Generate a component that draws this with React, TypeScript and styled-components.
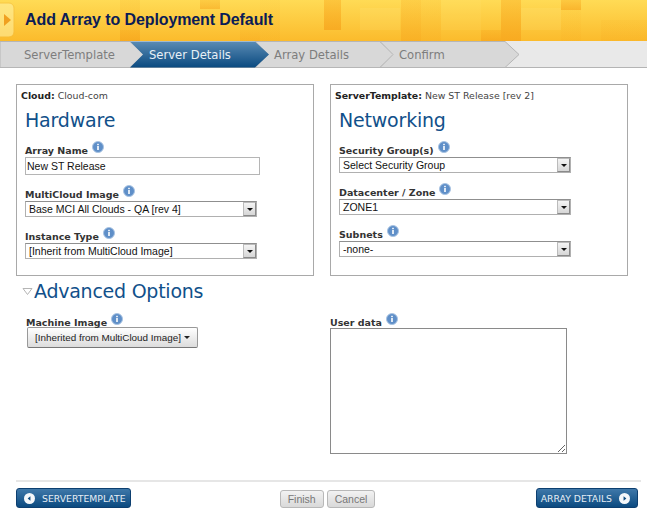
import React from 'react';
import styled, { createGlobalStyle } from 'styled-components';

const GlobalStyle = createGlobalStyle`
	html, body {
		margin: 0;
		padding: 0;
		background: #fff;
	}
	* {
		box-sizing: border-box;
	}
`;

const Page = styled.div`
	width: 647px;
	height: 515px;
	overflow: hidden;
	font-family: 'DejaVu Sans', sans-serif;
	color: #333;
`;

const Header = styled.header`
	position: relative;
	height: 41px;
	padding-left: 25px;
	display: flex;
	align-items: center;
	overflow: hidden;
	background: linear-gradient(#ffdb55, #fbbb2c);
`;

const Mosaic = styled.svg`
	position: absolute;
	left: 0;
	top: 0;
`;

const Title = styled.h1`
	position: relative;
	margin: 0 0 1px;
	font: bold 16px 'Liberation Sans', sans-serif;
	letter-spacing: -0.1px;
	color: #0b1c56;
`;

const StepBar = styled.nav`
	display: flex;
	height: 27px;
	background: #e9e9e9;
	border-bottom: 1px solid #b4b4b4;
`;

const Step = styled.div<{ $first?: boolean; $active?: boolean }>`
	position: relative;
	width: ${p => (p.$first ? 130 : 125)}px;
	padding-left: ${p => (p.$first ? 24 : 19)}px;
	z-index: ${p => (p.$active ? 2 : 1)};
	font-size: 11.6px;
	line-height: 28px;
	color: ${p => (p.$active ? '#e8f0f6' : '#7d7d7d')};
`;

const StepShape = styled.svg`
	position: absolute;
	right: -15px;
	top: 0;
`;

const StepLabel = styled.span`
	position: relative;
`;

const Body = styled.main`
	padding: 16px 19px 0 16px;
`;

const Panels = styled.div`
	display: grid;
	grid-template-columns: 298px 298px;
	column-gap: 16px;
`;

const Panel = styled.section`
	height: 192px;
	border: 1px solid #a9a9a9;
	padding: 4px 0 0 8px;
`;

const Context = styled.div`
	font-size: 9.4px;
	line-height: 14px;
	margin-left: -4px;
	color: #444;
	b {
		color: #222;
	}
`;

const PanelTitle = styled.h2`
	margin: 4px 0 8px;
	font-size: 19px;
	letter-spacing: -0.2px;
	line-height: 26px;
	font-weight: normal;
	color: #11508a;
`;

const Field = styled.div`
	margin-bottom: 10px;
`;

const Label = styled.label`
	display: flex;
	align-items: flex-start;
	gap: 4px;
	height: 16px;
	font-size: 9.5px;
	line-height: 19px;
	font-weight: bold;
	color: #333;
`;

const ShortLabel = styled(Label)`
	height: 14px;
`;

const TextInput = styled.input`
	display: block;
	width: 235px;
	height: 18px;
	padding: 0 1px;
	border: 1px solid #b5b5b5;
	font: 10.5px 'Liberation Sans', sans-serif;
	color: #111;
	outline: none;
`;

const SelectBox = styled.div`
	display: flex;
	justify-content: space-between;
	align-items: center;
	width: 232px;
	height: 16px;
	padding: 0 0 0 3px;
	border: 1px solid #b0b0b0;
	border-top-color: #8f8f8f;
	font: 10.5px 'Liberation Sans', sans-serif;
	color: #111;
`;

const SelectArrow = styled.span`
	display: flex;
	align-items: center;
	justify-content: center;
	width: 13px;
	height: 14px;
	border: 1px solid #8a8a8a;
	border-top-color: #bbb;
	border-left-color: #bbb;
	background: linear-gradient(#f4f4f4, #d6d6d6);
	&::after {
		content: '';
		border: 3px solid transparent;
		border-top: 3px solid #111;
		border-bottom: 0;
	}
`;

const AdvancedTitle = styled.h2`
	display: flex;
	align-items: center;
	gap: 1px;
	margin: 0 0 0 6px;
	height: 30px;
	font-size: 19px;
	letter-spacing: -0.25px;
	font-weight: normal;
	color: #11508a;
`;

const AdvancedGrid = styled.div`
	display: grid;
	grid-template-columns: 298px 1fr;
	column-gap: 16px;
	margin-top: 7px;
`;

const MachineColumn = styled.div`
	padding-left: 10px;
`;

const DropButton = styled.button`
	display: flex;
	align-items: center;
	gap: 3px;
	width: 171px;
	height: 21px;
	margin-left: 1px;
	padding: 0 0 0 7px;
	border: 1px solid #999;
	border-bottom-color: #777;
	border-radius: 2px;
	background: linear-gradient(#fff, #dcdcdc);
	font: 9.9px 'Liberation Sans', sans-serif;
	color: #222;
	white-space: nowrap;
	&::after {
		content: '';
		border: 3px solid transparent;
		border-top: 3px solid #222;
		border-bottom: 0;
	}
`;

const UserData = styled.textarea`
	display: block;
	width: 237px;
	height: 126px;
	margin-top: 1px;
	border: 1px solid #8a8a8a;
	outline: none;
	resize: both;
`;

const Footer = styled.footer`
	display: grid;
	grid-template-columns: 1fr auto 1fr;
	align-items: end;
	width: 625px;
	height: 28px;
	margin-top: 26px;
	padding-right: 2px;
	border-top: 2px solid #e6e6e6;
`;

const NavButton = styled.button<{ $next?: boolean }>`
	display: flex;
	align-items: center;
	gap: 7px;
	justify-self: ${p => (p.$next ? 'end' : 'start')};
	margin-right: ${p => (p.$next ? 1 : 0)}px;
	height: 20px;
	padding: ${p => (p.$next ? '0 7px 0 4px' : '0 4px 0 7px')};
	border: 1px solid #0d3f70;
	border-radius: 3px;
	background: linear-gradient(#3f78a9, #0b4a80);
	font: 9.3px 'DejaVu Sans', sans-serif;
	color: #e6eef5;
`;

const ActionGroup = styled.div`
	display: flex;
	gap: 3px;
`;

const ActionButton = styled.button`
	height: 18px;
	padding: 0 7px;
	border: 1px solid #b8b8b8;
	border-radius: 3px;
	background: linear-gradient(#f2f2f2, #d9d9d9);
	font: 10.5px 'Liberation Sans', sans-serif;
	color: #777;
`;

// [x, y, w, h, opacity] darker orange tiles of the header texture
const darkTiles = [
	[120, 0, 20, 41, 0.25],
	[200, 0, 20, 9, 0.5],
	[120, 30, 20, 11, 0.5],
	[240, 30, 20, 11, 0.3],
	[260, 0, 20, 41, 0.12],
	[324, 0, 17, 30, 0.7],
	[401, 0, 20, 41, 0.4],
	[421, 0, 20, 41, 0.2],
	[481, 30, 20, 11, 0.6],
	[501, 0, 20, 41, 0.65],
	[561, 0, 20, 10, 0.6],
	[561, 10, 20, 31, 0.1],
	[601, 20, 46, 21, 0.15]
];

const lightTiles = [
	[360, 8, 40, 22, 0.15],
	[521, 8, 40, 22, 0.15],
	[441, 0, 40, 30, 0.1]
];

const HeaderTexture = () => (
	<Mosaic width={647} height={41}>
		<defs>
			<linearGradient id='tile' x1='0' y1='0' x2='0' y2='1'>
				<stop offset='0' stopColor='#f9a81c' stopOpacity='0.6' />
				<stop offset='1' stopColor='#f6a11a' />
			</linearGradient>
		</defs>
		{lightTiles.map(([x, y, w, h, o]) => (
			<rect key={`l${x}${y}`} x={x} y={y} width={w} height={h} fill='#ffe98a' opacity={o} />
		))}
		{darkTiles.map(([x, y, w, h, o]) => (
			<rect key={`d${x}${y}`} x={x} y={y} width={w} height={h} fill='url(#tile)' opacity={o} />
		))}
		<rect x={-6} y={3} width={20} height={34} rx={5} fill='#fff3a8' opacity={0.55} stroke='#f5bc3a' />
		<path d='M4 14 L11 20 L4 26 Z' fill='#f0a020' />
	</Mosaic>
);

const InfoIcon = () => (
	<svg width={12} height={12} viewBox='0 0 12 12'>
		<circle cx={6} cy={6} r={5.5} fill='#5f8fc8' stroke='#a9c3e2' />
		<rect x={5.2} y={5} width={1.6} height={4} fill='#fff' />
		<rect x={5.2} y={2.8} width={1.6} height={1.4} fill='#fff' />
	</svg>
);

const Discloser = () => (
	<svg width={11} height={9} viewBox='0 0 11 9'>
		<path d='M1 1.5 H10 L5.5 7.5 Z' fill='#fff' stroke='#b5b5b5' />
	</svg>
);

const RoundArrow = ({ next }: { next?: boolean }) => (
	<svg width={11} height={11} viewBox='0 0 12 12'>
		<circle cx={6} cy={6} r={6} fill='#f4f7fa' />
		<path d={next ? 'M5 3.5 L8 6 L5 8.5 Z' : 'M7 3.5 L4 6 L7 8.5 Z'} fill='#0e4a7e' />
	</svg>
);

const ChevronShape = ({ width, active }: { width: number; active?: boolean }) => (
	<StepShape width={width + 15} height={27}>
		<defs>
			<linearGradient id='activeStep' x1='0' y1='0' x2='0' y2='1'>
				<stop offset='0' stopColor='#5a8bb4' />
				<stop offset='1' stopColor='#0a4a80' />
			</linearGradient>
		</defs>
		<path
			d={`M0 0.5 H${width} L${width + 14} 13.5 L${width} 26.5 H0 L13 13.5 Z`}
			fill={active ? 'url(#activeStep)' : '#d8d8d8'}
			stroke={active ? 'none' : '#b6b6b6'}
		/>
	</StepShape>
);

const FirstShape = ({ width }: { width: number }) => (
	<StepShape width={width + 15} height={27}>
		<path
			d={`M0 0.5 H${width} L${width + 14} 13.5 L${width} 26.5 H0 Z`}
			fill='#d8d8d8'
			stroke='#b6b6b6'
		/>
	</StepShape>
);

type SelectProps = { label: string; value: string };

const SelectField: React.FC<SelectProps> = ({ label, value }) => (
	<Field>
		<Label>
			{label} <InfoIcon />
		</Label>
		<SelectBox>
			{value}
			<SelectArrow />
		</SelectBox>
	</Field>
);

const App: React.FC = () => (
	<Page>
		<GlobalStyle />
		<Header>
			<HeaderTexture />
			<Title>Add Array to Deployment Default</Title>
		</Header>
		<StepBar>
			<Step $first>
				<FirstShape width={130} />
				<StepLabel>ServerTemplate</StepLabel>
			</Step>
			<Step $active>
				<ChevronShape width={125} active />
				<StepLabel>Server Details</StepLabel>
			</Step>
			<Step>
				<ChevronShape width={125} />
				<StepLabel>Array Details</StepLabel>
			</Step>
			<Step>
				<ChevronShape width={125} />
				<StepLabel>Confirm</StepLabel>
			</Step>
		</StepBar>
		<Body>
			<Panels>
				<Panel>
					<Context>
						<b>Cloud:</b> Cloud-com
					</Context>
					<PanelTitle>Hardware</PanelTitle>
					<Field>
						<Label>
							Array Name <InfoIcon />
						</Label>
						<TextInput defaultValue='New ST Release' />
					</Field>
					<SelectField label='MultiCloud Image' value='Base MCI All Clouds - QA [rev 4]' />
					<SelectField label='Instance Type' value='[Inherit from MultiCloud Image]' />
				</Panel>
				<Panel>
					<Context>
						<b>ServerTemplate:</b> New ST Release [rev 2]
					</Context>
					<PanelTitle>Networking</PanelTitle>
					<SelectField label='Security Group(s)' value='Select Security Group' />
					<SelectField label='Datacenter / Zone' value='ZONE1' />
					<SelectField label='Subnets' value='-none-' />
				</Panel>
			</Panels>
			<AdvancedTitle>
				<Discloser />
				Advanced Options
			</AdvancedTitle>
			<AdvancedGrid>
				<MachineColumn>
					<ShortLabel>
						Machine Image <InfoIcon />
					</ShortLabel>
					<DropButton>[Inherited from MultiCloud Image]</DropButton>
				</MachineColumn>
				<div>
					<ShortLabel>
						User data <InfoIcon />
					</ShortLabel>
					<UserData />
				</div>
			</AdvancedGrid>
			<Footer>
				<NavButton>
					<RoundArrow />
					SERVERTEMPLATE
				</NavButton>
				<ActionGroup>
					<ActionButton>Finish</ActionButton>
					<ActionButton>Cancel</ActionButton>
				</ActionGroup>
				<NavButton $next>
					ARRAY DETAILS
					<RoundArrow next />
				</NavButton>
			</Footer>
		</Body>
	</Page>
);

export default App;
